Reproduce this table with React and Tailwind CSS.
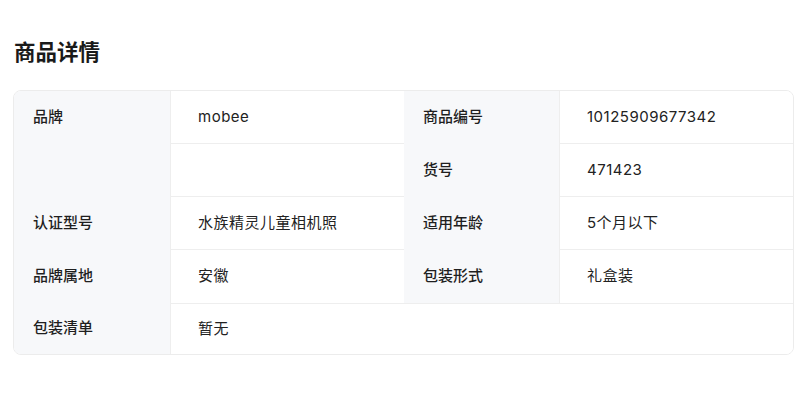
import React from 'react';

const font = { fontFamily: 'Inter, "Noto Sans CJK SC", sans-serif' };

const rows = [
  { l1: '品牌', v1: 'mobee', l2: '商品编号', v2: '10125909677342' },
  { l1: '', v1: '', l2: '货号', v2: '471423' },
  { l1: '认证型号', v1: '水族精灵儿童相机照', l2: '适用年龄', v2: '5个月以下' },
  { l1: '品牌属地', v1: '安徽', l2: '包装形式', v2: '礼盒装' },
];

function Label({ children, h = 'h-[53px]' }) {
  return (
    <div className={`${h} bg-[#f7f8fa] flex items-center pl-[19px] text-[15px] font-medium text-[#1f1f1f]`}>
      {children}
    </div>
  );
}

function Value({ children, border }) {
  return (
    <div
      className={`h-[53px] bg-white flex items-center pl-[27px] text-[15px] tracking-[0.5px] text-[#222] border-l border-[#eeeeee] ${
        border ? 'border-b' : ''
      }`}
    >
      {children}
    </div>
  );
}

export default function App() {
  return (
    <div className="w-[806px] h-[398px] bg-white" style={font}>
      <div className="px-[13px] pt-[37px]">
        <h2 className="text-[21.5px] leading-[30px] font-semibold text-[#1a1a1a] pl-px">商品详情</h2>
        <div className="mt-[23px] w-[781px] border border-[#ececec] rounded-lg overflow-hidden">
          <div className="grid grid-cols-[156px_234px_155px_1fr]">
            {rows.map((r, i) => (
              <React.Fragment key={i}>
                <Label>{r.l1}</Label>
                <Value border={i < 3}>{r.v1}</Value>
                <Label>{r.l2}</Label>
                <Value border={i < 3}>{r.v2}</Value>
              </React.Fragment>
            ))}
            <Label h="h-[51px]">包装清单</Label>
            <div className="col-span-3 h-[51px] bg-white flex items-center pl-[27px] text-[15px] tracking-[0.5px] text-[#222] border-l border-t border-[#eeeeee]">
              暂无
            </div>
          </div>
        </div>
      </div>
    </div>
  );
}
